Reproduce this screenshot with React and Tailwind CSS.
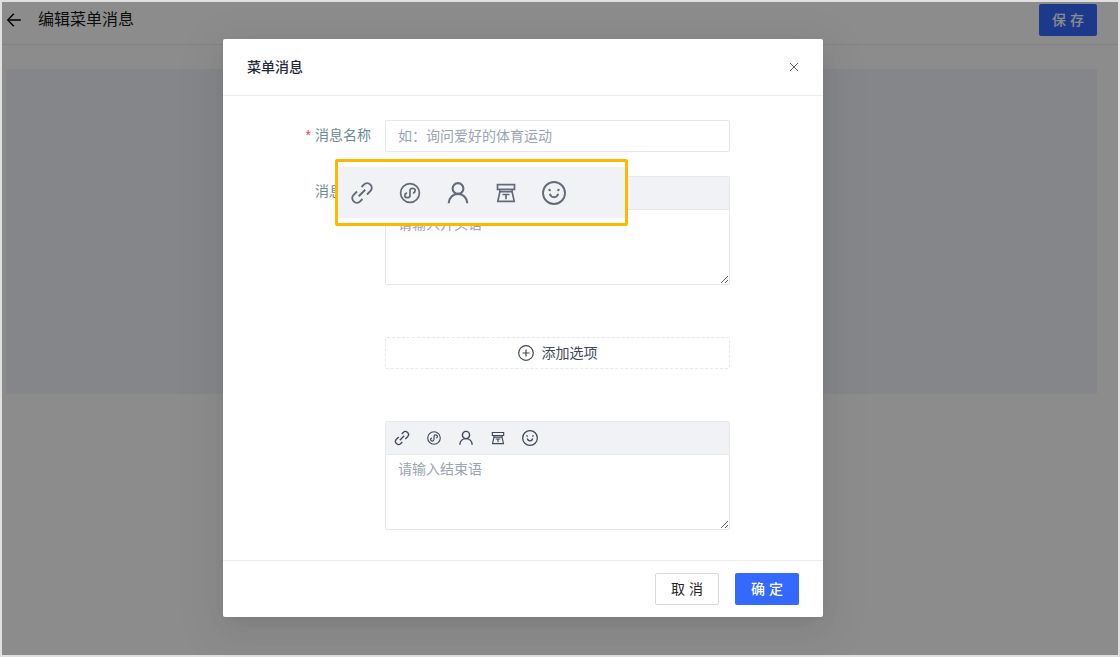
import React, { useState } from "react";

const LinkIcon = ({ size = 16 }) => (
  <svg
    width={size}
    height={size}
    viewBox="0 0 24 24"
    fill="none"
    stroke="currentColor"
    strokeWidth="2"
  >
    <g transform="rotate(-45 12 12)">
      <path d="M9.600 7.400H4.800a4.600 4.600 0 0 0 0 9.200H8" />
      <path d="M14.400 16.600h4.800a4.600 4.600 0 0 0 0-9.200H16" />
      <path d="M7.400 12h9.200" />
    </g>
  </svg>
);

const MiniProgramIcon = ({ size = 16 }) => (
  <svg
    width={size}
    height={size}
    viewBox="0 0 24 24"
    fill="none"
    stroke="currentColor"
    strokeWidth="1.7"
  >
    <circle cx="12" cy="12" r="9.4" />
    <path d="M15 12.100c1.300-.400 2.200-1.400 2.200-2.500 0-1.300-1.200-2.300-2.600-2.300S12 8.300 12 9.600v4.800c0 1.300-1.200 2.300-2.600 2.300s-2.600-1-2.600-2.300c0-1.100.900-2.100 2.200-2.500" />
  </svg>
);

const PersonIcon = ({ size = 16 }) => (
  <svg
    width={size}
    height={size}
    viewBox="0 0 24 24"
    fill="none"
    stroke="currentColor"
    strokeWidth="2.1"
  >
    <circle cx="12" cy="7.5" r="5.4" />
    <path d="M2.700 22.200c.300-5.600 4.300-9.300 9.300-9.300s9 3.700 9.300 9.300" />
  </svg>
);

const PhoneIcon = ({ size = 16 }) => (
  <svg
    width={size}
    height={size}
    viewBox="0 0 24 24"
    fill="none"
    stroke="currentColor"
    strokeWidth="1.7"
  >
    <path d="M3.500 3.700h17v4.600h-17z" />
    <path d="M5.900 8.300v2.400L3.800 20.400h16.400l-2.100-9.700V8.300" />
    <path d="M5.900 10.700h12.200M8.500 13.500h7M12 13.500v4.800" />
  </svg>
);

const SmileIcon = ({ size = 16 }) => (
  <svg
    width={size}
    height={size}
    viewBox="0 0 24 24"
    fill="none"
    stroke="currentColor"
    strokeWidth="1.9"
  >
    <circle cx="12" cy="12" r="11" />
    <path d="M7.800 12.800c.600 2.200 2.200 3.400 4.200 3.400s3.600-1.200 4.200-3.400" />
    <path d="M6.600 8.200l2 1.600M17.400 8.200l-2 1.600" />
  </svg>
);

const CloseIcon = () => (
  <svg width="10" height="10" viewBox="0 0 10 10" stroke="currentColor">
    <path d="M1 1l8 8M9 1l-8 8" />
  </svg>
);

const BackIcon = () => (
  <svg
    width="16"
    height="16"
    viewBox="0 0 16 16"
    fill="none"
    stroke="currentColor"
    strokeWidth="1.4"
  >
    <path d="M14.800 8H2M7.800 1.800L1.800 8l6 6.200" />
  </svg>
);

const PlusCircleIcon = () => (
  <svg
    width="16"
    height="16"
    viewBox="0 0 16 16"
    fill="none"
    stroke="currentColor"
    strokeWidth="1.2"
  >
    <circle cx="8" cy="8" r="7.300" />
    <path d="M8 4.500v7M4.500 8h7" />
  </svg>
);

const tools = [
  { label: "链接", Icon: LinkIcon },
  { label: "小程序", Icon: MiniProgramIcon },
  { label: "联系人", Icon: PersonIcon },
  { label: "电话", Icon: PhoneIcon },
  { label: "表情", Icon: SmileIcon },
];

const Editor = ({ id, label, placeholder, value, onChange }) => (
  <div className="border border-[#e6e8ec] rounded-xs">
    <div className="flex items-center gap-4 h-8 px-2 bg-[#f1f2f6] text-[#3f475a]">
      {tools.map(({ label, Icon }) => (
        <button key={label} type="button" aria-label={label}>
          <Icon />
        </button>
      ))}
    </div>
    <textarea
      id={id}
      aria-label={label}
      value={value}
      onChange={(e) => onChange(e.target.value)}
      placeholder={placeholder}
      className="block w-full h-[75px] px-3 py-1 border-t border-[#e6e8ec] leading-5 resize-y outline-none placeholder:text-[#9ca5b5]"
    />
  </div>
);

// Enlarged view of the editor toolbar
const ToolbarHighlight = () => (
  <div className="absolute -left-[50px] -top-[17px] w-[293px] py-[5px] bg-white border-3 border-[#ffb800] rounded-xs">
    <div className="flex items-center gap-6 h-[51px] pl-3 bg-[#f1f2f6] text-[#636b7a]">
      {tools.map(({ label, Icon }) => (
        <Icon key={label} size={24} />
      ))}
    </div>
  </div>
);

const MenuMessageModal = () => {
  const [name, setName] = useState("");
  const [opening, setOpening] = useState("");
  const [closing, setClosing] = useState("");

  return (
    <div
      role="dialog"
      aria-labelledby="modal-title"
      className="w-full max-w-[600px] bg-white rounded-xs shadow-[0_12px_48px_16px_rgba(0,0,0,0.03),0_9px_28px_rgba(0,0,0,0.05),0_6px_16px_-8px_rgba(0,0,0,0.08)]"
    >
      <div className="flex items-center justify-between h-[57px] px-6 border-b border-[#ebedf0]">
        <h2 id="modal-title" className="font-medium text-[#1f2a3d]">
          菜单消息
        </h2>
        <button
          type="button"
          aria-label="关闭"
          className="w-[10px] text-[#606060]"
        >
          <CloseIcon />
        </button>
      </div>

      <form className="px-6 pt-6 pb-[30px]">
        <div className="flex mb-6">
          <label
            htmlFor="name"
            className="w-1/4 pr-[14px] text-right leading-[30px] text-[#6b8a94]"
          >
            <span className="mr-1 text-[#f0404b]">*</span>
            消息名称
          </label>
          <input
            id="name"
            type="text"
            value={name}
            onChange={(e) => setName(e.target.value)}
            placeholder="如：询问爱好的体育运动"
            className="w-5/8 h-8 px-3 border border-[#e6e8ec] rounded-xs outline-none placeholder:text-[#9ca5b5]"
          />
        </div>

        <div className="flex">
          <label
            htmlFor="opening"
            className="w-1/4 pr-[14px] text-right leading-[30px] text-[#6b8a94]"
          >
            消息内容
          </label>
          <div className="relative w-5/8">
            <Editor
              id="opening"
              placeholder="请输入开头语"
              value={opening}
              onChange={setOpening}
            />
            <ToolbarHighlight />

            <button
              type="button"
              className="flex items-center justify-center gap-2 w-full h-8 my-[52px] border border-dashed border-[#e6e8ec] rounded-xs text-[#3f475a]"
            >
              <PlusCircleIcon />
              添加选项
            </button>

            <Editor
              id="closing"
              label="结束语"
              placeholder="请输入结束语"
              value={closing}
              onChange={setClosing}
            />
          </div>
        </div>
      </form>

      <div className="flex justify-end gap-4 px-6 py-3 border-t border-[#ebedf0]">
        <button
          type="button"
          className="w-16 h-8 border border-[#d9d9d9] rounded-xs text-[#262626]"
        >
          取 消
        </button>
        <button
          type="button"
          className="w-16 h-8 bg-[#3469ff] rounded-xs font-medium text-white"
        >
          确 定
        </button>
      </div>
    </div>
  );
};

const App = () => {
  return (
    <div className="relative min-h-screen border-2 border-[#e0e0e0] bg-white text-sm font-['Liberation_Sans','Noto_Sans_CJK_SC',sans-serif]">
      <header className="flex items-center justify-between pt-0.5 pb-2 pl-1 pr-[21px] border-b border-[#ebedf0]">
        <div className="flex items-center gap-4">
          <button type="button" aria-label="返回" className="text-black">
            <BackIcon />
          </button>
          <h1 className="text-base text-[#171717]">编辑菜单消息</h1>
        </div>
        <button
          type="button"
          className="w-[58px] h-8 bg-[#3469ff] rounded-xs font-medium text-white"
        >
          保 存
        </button>
      </header>
      <main className="h-[325px] mt-6 ml-1 mr-[21px] bg-[#f2f5f9]"></main>

      <div className="absolute inset-0 flex items-start justify-center pt-[37px] pr-[74px] bg-black/45">
        <MenuMessageModal />
      </div>
    </div>
  );
};

export default App;
